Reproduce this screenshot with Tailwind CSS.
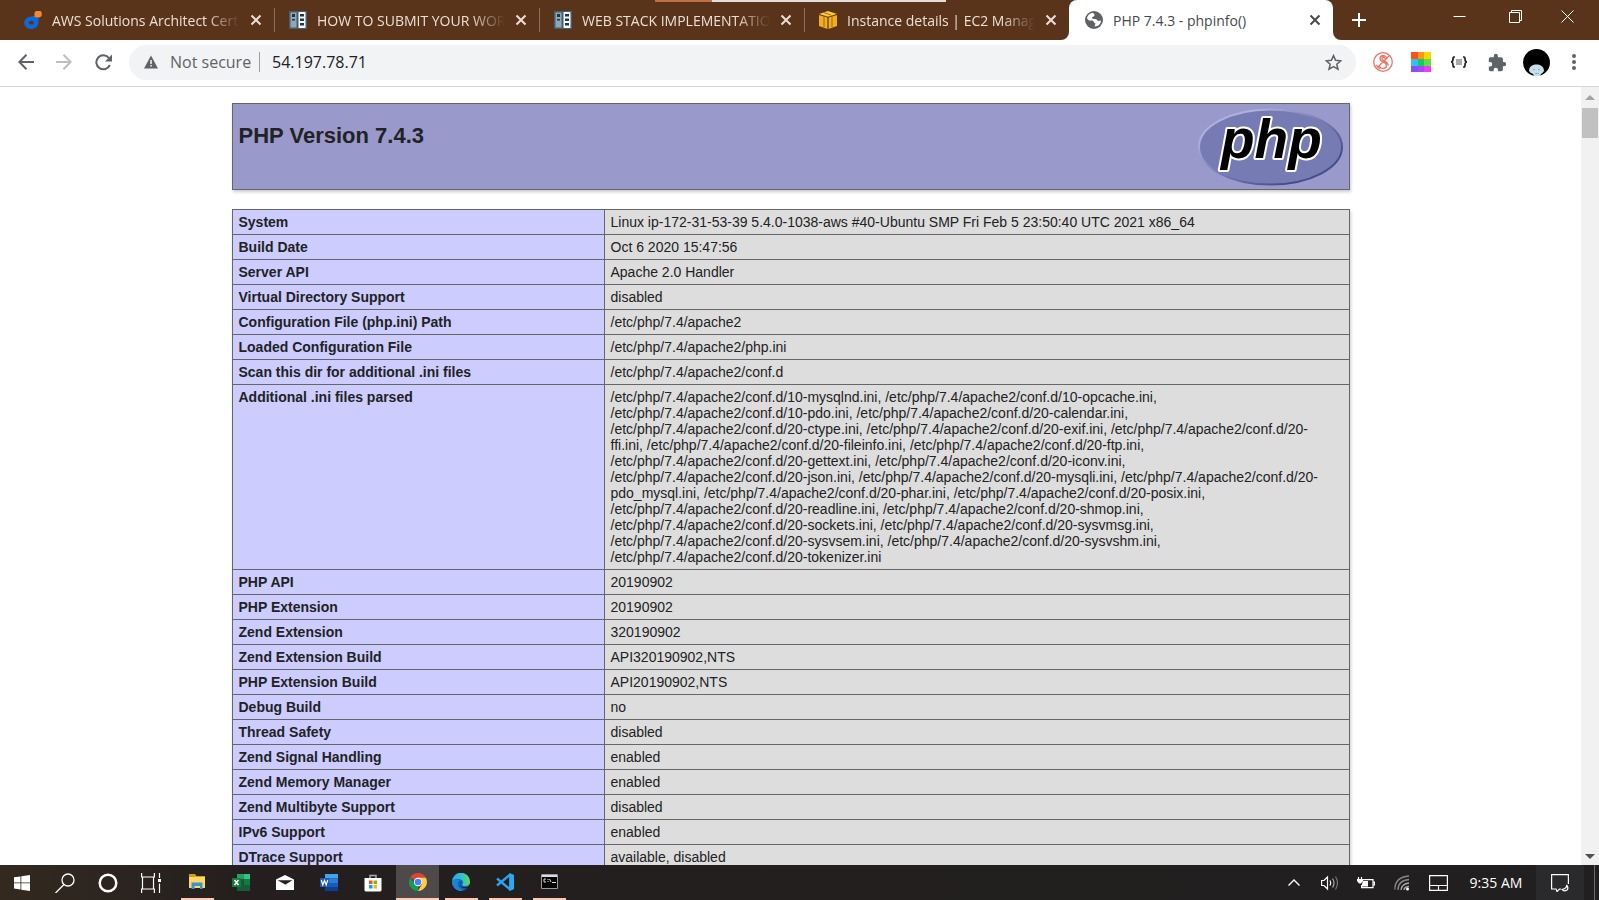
<!DOCTYPE html>
<html lang="en">
<head>
<meta charset="utf-8">
<title>PHP 7.4.3 - phpinfo()</title>
<script src="https://cdn.jsdelivr.net/npm/@tailwindcss/browser@4"></script>
</head>
<body class="flex h-screen flex-col overflow-hidden bg-white font-['Open_Sans','Noto_Sans',sans-serif] text-[#222]">

<!-- Tab strip -->
<header class="relative flex h-10 shrink-0 bg-[#5a341a] pl-2.5 text-[14px] text-[#ecdfd6]">
  <div class="absolute left-[655px] top-0 flex h-0.5 w-[291px]"><span class="w-[57px] bg-[#bf7040]"></span><span class="flex-1 bg-[#e4ddd8]"></span></div>
  <nav class="flex" aria-label="Tabs">
    <div class="flex w-[265px] items-center pl-3.5">
      <svg class="size-[18px] shrink-0" viewBox="0 0 18 18"><path fill="#0f68d8" fill-rule="evenodd" d="M7 5.500C9 5 12 5.500 14.500 5.500V12A7.200 6.300 0 1 1 7 5.500ZM7.300 9.800a2.500 1.900 0 1 0 .1 0Z"/><path fill="#f58634" d="M10.500 6V3.500A3.700 3.500 0 1 1 14.500 6.500Z"/></svg>
      <a href="#" class="ml-2.5 w-[188px] overflow-hidden whitespace-nowrap [mask-image:linear-gradient(to_right,black_82%,transparent)]">AWS Solutions Architect Certification</a>
      <button class="ml-2.5" aria-label="Close tab"><svg class="size-3" viewBox="0 0 12 12" fill="none" stroke="currentColor" stroke-width="2"><path d="M1.500 1.500l9 9m0-9l-9 9"/></svg></button>
      <span class="ml-auto h-6 w-px bg-[#8c6f5b]"></span>
    </div>
    <div class="flex w-[265px] items-center pl-3.5">
      <svg class="size-[18px] shrink-0" viewBox="0 0 18 18"><path fill="#455f6c" d="M0 0h18v18H0z"/><path fill="#8ba9b8" d="M1.500 1.500h6v15h-6z"/><path fill="#f5f8fa" d="M9.500 1h7v16h-7z"/><path fill="#24353e" d="M3 3h3v3H3zm0 5h3v1.500H3zM11 3h4v2.500h-4zm0 4.500h4V10h-4zm0 4.500h4v2.500h-4z"/></svg>
      <a href="#" class="ml-2.5 w-[188px] overflow-hidden whitespace-nowrap [mask-image:linear-gradient(to_right,black_82%,transparent)]">HOW TO SUBMIT YOUR WORK</a>
      <button class="ml-2.5" aria-label="Close tab"><svg class="size-3" viewBox="0 0 12 12" fill="none" stroke="currentColor" stroke-width="2"><path d="M1.500 1.500l9 9m0-9l-9 9"/></svg></button>
      <span class="ml-auto h-6 w-px bg-[#8c6f5b]"></span>
    </div>
    <div class="flex w-[265px] items-center pl-3.5">
      <svg class="size-[18px] shrink-0" viewBox="0 0 18 18"><path fill="#455f6c" d="M0 0h18v18H0z"/><path fill="#8ba9b8" d="M1.500 1.500h6v15h-6z"/><path fill="#f5f8fa" d="M9.500 1h7v16h-7z"/><path fill="#24353e" d="M3 3h3v3H3zm0 5h3v1.500H3zM11 3h4v2.500h-4zm0 4.500h4V10h-4zm0 4.500h4v2.500h-4z"/></svg>
      <a href="#" class="ml-2.5 w-[188px] overflow-hidden whitespace-nowrap [mask-image:linear-gradient(to_right,black_82%,transparent)]">WEB STACK IMPLEMENTATION</a>
      <button class="ml-2.5" aria-label="Close tab"><svg class="size-3" viewBox="0 0 12 12" fill="none" stroke="currentColor" stroke-width="2"><path d="M1.500 1.500l9 9m0-9l-9 9"/></svg></button>
      <span class="ml-auto h-6 w-px bg-[#8c6f5b]"></span>
    </div>
    <div class="flex w-[264px] items-center pl-3.5">
      <svg class="size-[18px] shrink-0" viewBox="0 0 18 18"><path fill="#ffc83c" d="M0 3L9 0l9 3-9 3z"/><path fill="#f2ae1c" d="M0 4l8.500 2.500V18L0 15zM18 4L9.500 6.500V18l8.500-3z"/><path stroke="#7a4d0b" fill="none" d="M0 3.500L9 6l9-2.500M9 6v12M4.500 1.500L12 4M5 5v11M13 5v11" stroke-width=".7"/></svg>
      <a href="#" class="ml-2.5 w-[188px] overflow-hidden whitespace-nowrap [mask-image:linear-gradient(to_right,black_82%,transparent)]">Instance details | EC2 Management</a>
      <button class="ml-2.5" aria-label="Close tab"><svg class="size-3" viewBox="0 0 12 12" fill="none" stroke="currentColor" stroke-width="2"><path d="M1.500 1.500l9 9m0-9l-9 9"/></svg></button>
    </div>
    <div class="relative flex w-[264px] items-center rounded-t-lg bg-white pl-4 text-[#45494d]">
      <svg class="absolute bottom-0 -left-2 size-2" viewBox="0 0 8 8"><path fill="#fff" d="M8 0v8H0a8 8 0 0 0 8-8z"/></svg>
      <svg class="absolute bottom-0 -right-2 size-2" viewBox="0 0 8 8"><path fill="#fff" d="M0 0v8h8a8 8 0 0 1-8-8z"/></svg>
      <svg class="size-[18px] shrink-0" viewBox="0 0 18 18"><circle cx="9" cy="9" r="9" fill="#5f6368"/><path fill="#fff" d="M8.500 2C5 2 2.500 4 2 7.500L4 9.500c2 .5 2.500-.5 4 .5 1.500 1 .500 2 2.500 2.500L9.500 15.500c4 0 6.500-3 6.500-6l-2.500.5C12 9.500 12 8 10 8 8 8 7 8 7 6.500 7 5.500 9 6 9.500 4.500 10 3.500 8.500 3 8.500 2z"/></svg>
      <a href="#" class="ml-2.5 w-[186px] overflow-hidden whitespace-nowrap">PHP 7.4.3 - phpinfo()</a>
      <button class="ml-2.5" aria-label="Close tab"><svg class="size-3" viewBox="0 0 12 12" fill="none" stroke="currentColor" stroke-width="2"><path d="M1.500 1.500l9 9m0-9l-9 9"/></svg></button>
    </div>
  </nav>
  <button class="ml-[19px]" aria-label="New tab"><svg class="size-3.5" viewBox="0 0 14 14" fill="none" stroke="#fff" stroke-width="2"><path d="M7 0v14M0 7h14"/></svg></button>
  <div class="ml-auto flex h-8 pr-2 text-white">
    <button class="flex w-14 items-center justify-center" aria-label="Minimize"><svg class="size-[13px]" viewBox="0 0 13 13" stroke="currentColor"><path d="M.5 6.500h12"/></svg></button>
    <button class="flex w-14 items-center justify-center" aria-label="Restore"><svg class="size-[13px]" viewBox="0 0 13 13" fill="none" stroke="currentColor"><path d="M.5 2.500h10v10H.5zM2.500 2.500v-2h10v10h-2"/></svg></button>
    <button class="flex w-12 items-center justify-center" aria-label="Close"><svg class="size-[13px]" viewBox="0 0 13 13" stroke="currentColor"><path d="M.5.5l12 12m0-12l-12 12"/></svg></button>
  </div>
</header>

<!-- Toolbar -->
<div class="flex h-[47px] shrink-0 items-center border-b border-[#d6d6d6] pb-0.5 pr-[7px] pt-0 text-[#5f6368]">
  <div class="flex w-[129px] shrink-0 pl-[7px]">
    <button class="flex w-[38px] justify-center" aria-label="Back"><svg class="size-4" viewBox="0 0 16 16" fill="none" stroke="currentColor" stroke-width="2"><path d="M16 8H1.500M8.500.8L1.400 8l7.100 7.200"/></svg></button>
    <button class="flex w-[38px] justify-center text-[#bcbec0]" aria-label="Forward"><svg class="size-4" viewBox="0 0 16 16" fill="none" stroke="currentColor" stroke-width="2"><path d="M0 8h14.500M7.500.8L14.600 8l-7.100 7.200"/></svg></button>
    <button class="flex w-[40px] justify-center" aria-label="Reload"><svg class="size-[17px]" viewBox="0 0 17 17" fill="none" stroke="currentColor" stroke-width="2"><path d="M14.800 11A7 7 0 1 1 14 4.200"/><path d="M17 .5V7.500H10z" fill="currentColor" stroke="none"/></svg></button>
  </div>
  <div class="flex h-[35px] flex-1 items-center rounded-full bg-[#f1f3f4] pl-[15px] pr-3.5 text-[16px]">
    <svg class="size-3.5 shrink-0" viewBox="0 0 14 14"><path fill="#5f6368" d="M7 .5L14 13.500H0z"/><path fill="#f1f3f4" d="M6.300 5h1.500v4H6.300zm0 5h1.500v1.500H6.300z"/></svg>
    <span class="ml-3 w-[80px] whitespace-nowrap">Not secure</span>
    <span class="ml-[9px] h-5 w-px bg-[#9aa0a6]"></span>
    <input class="ml-3 min-w-0 flex-1 bg-transparent text-[#202124] outline-none" aria-label="Address" value="54.197.78.71">
    <button aria-label="Bookmark"><svg class="size-[17px]" viewBox="0 0 17 17" fill="none" stroke="currentColor" stroke-width="1.500"><path d="M8.500 1.600l2.100 4.700 5.100.5-3.900 3.400 1.200 5-4.500-2.700L4 15.200l1.200-5L1.300 6.800l5.100-.5z"/></svg></button>
  </div>
  <div class="ml-2 flex h-[35px] items-center">
    <button class="flex w-[38px] justify-center" aria-label="Extension"><svg class="size-5" viewBox="0 0 20 20" fill="none" stroke="#ee7263"><circle cx="10" cy="10" r="9.300" stroke-width="1.300"/><path stroke-width="1.300" d="M13.500 5.500C12 3 7 3 7 6.500c0 4 6.500 3 6.500 7 0 3.500-5.500 3.800-7 1M12.500 7C11 4.500 8.800 5 8.800 6.500c0 2.500 6.500 3 6.500 7M4 16L16 4M3 13l4 4"/></svg></button>
    <button class="flex w-[38px] justify-center" aria-label="Colour extension"><svg class="size-5" viewBox="0 0 20 20"><path fill="#ff5016" d="M0 0h7v7H0z"/><path fill="#ff9416" d="M7 0h6v7H7z"/><path fill="#ffd500" d="M13 0h7v7h-7z"/><path fill="#2fc0f4" d="M0 7h7v7H0z"/><path fill="#10cc66" d="M7 7h6v7H7z"/><path fill="#5ee043" d="M13 7h7v7h-7z"/><path fill="#8450f0" d="M0 14h7v6H0z"/><path fill="#b044f8" d="M7 14h6v6H7z"/><path fill="#ee3cf0" d="M13 14h7v6h-7z"/></svg></button>
    <button class="flex w-[38px] justify-center" aria-label="JSON extension"><svg class="h-3 w-4" viewBox="0 0 16 12" fill="none" stroke="#222"><path stroke-width="1.700" d="M4 1H3Q2 1 2 3 2 6 0 6q2 0 2 3 0 2 1 2h1M12 1h1q1 0 1 2 0 3 2 3-2 0-2 3 0 2-1 2h-1"/><path d="M5 4h6M5 6h6M5 8h6" stroke="#555"/></svg></button>
    <button class="flex w-[38px] justify-center" aria-label="Extensions"><svg class="size-[19px]" viewBox="1 0 23 23"><path fill="#5f6368" d="M20.500 11H19V7c0-1.100-.9-2-2-2h-4V3.500a2.500 2.500 0 0 0-5 0V5H4c-1.100 0-2 .9-2 2v3.800h1.500a2.700 2.700 0 0 1 0 5.400H2V20c0 1.100.9 2 2 2h3.800v-1.500a2.700 2.700 0 0 1 5.400 0V22H17c1.100 0 2-.9 2-2v-4h1.500a2.500 2.500 0 0 0 0-5z"/></svg></button>
    <button class="flex w-[40px] justify-center" aria-label="Profile"><svg class="size-[27px]" viewBox="0 0 27 27"><circle cx="13.500" cy="13.500" r="13.500" fill="#000"/><path fill="#c5dfe8" d="M6 22C6 17 10 15.500 13.500 15.500S21 17 21 22q-1 2-3 3l-1 2h-6l-1-2q-3-1-4-3z"/><path fill="#88aebd" d="M10 20h2v1h-2zm5 0h2v1h-2zm-3 4h4v1h-4z"/></svg></button>
    <button class="flex w-9 justify-center" aria-label="Menu"><svg class="h-4 w-1" viewBox="0 0 4 16" fill="#5f6368"><circle cx="2" cy="2" r="2"/><circle cx="2" cy="8" r="2"/><circle cx="2" cy="14" r="2"/></svg></button>
  </div>
</div>

<!-- Page -->
<div class="flex min-h-0 flex-1">
  <main class="min-w-0 flex-1 overflow-hidden px-6 pt-4 font-['Liberation_Sans',Arial,sans-serif] text-[14px] leading-4">
    <div class="mx-auto flex h-[87px] max-w-[1118px] items-start justify-between border border-[#666] bg-[#9999cc] px-1.5 py-1 shadow-[1px_2px_3px_#ccc]">
      <h1 class="mt-3.5 text-[22px] font-bold leading-7">PHP Version 7.4.3</h1>
      <svg class="h-[78px] w-[145px]" viewBox="0 0 145 78" role="img" aria-label="PHP logo">
        <defs><linearGradient id="rim" x1="0" y1="0" x2="1" y2="1"><stop offset=".2" stop-color="#aeb2de"/><stop offset=".5" stop-color="#777bb3"/><stop offset=".8" stop-color="#484c89"/></linearGradient></defs>
        <ellipse cx="72.500" cy="39" rx="71.500" ry="37.500" fill="#777bb3" stroke="url(#rim)" stroke-width="2"/>
        <text x="23" y="50" font-family="Liberation Sans" font-size="55" font-weight="700" font-style="italic" fill="#000" stroke="#fff" stroke-width="4" stroke-linejoin="round" paint-order="stroke">php</text>
      </svg>
    </div>
    <table class="mx-auto mt-[19px] w-full max-w-[1118px] border-collapse shadow-[1px_2px_3px_#ccc] [&_td]:border [&_td]:border-[#666] [&_td]:bg-[#dddddd] [&_td]:px-1.5 [&_td]:py-1 [&_td]:align-top [&_th]:w-[372px] [&_th]:border [&_th]:border-[#666] [&_th]:bg-[#ccccff] [&_th]:px-1.5 [&_th]:py-1 [&_th]:text-left [&_th]:align-top">
      <tbody>
        <tr><th scope="row">System</th><td>Linux ip-172-31-53-39 5.4.0-1038-aws #40-Ubuntu SMP Fri Feb 5 23:50:40 UTC 2021 x86_64</td></tr>
        <tr><th scope="row">Build Date</th><td>Oct 6 2020 15:47:56</td></tr>
        <tr><th scope="row">Server API</th><td>Apache 2.0 Handler</td></tr>
        <tr><th scope="row">Virtual Directory Support</th><td>disabled</td></tr>
        <tr><th scope="row">Configuration File (php.ini) Path</th><td>/etc/php/7.4/apache2</td></tr>
        <tr><th scope="row">Loaded Configuration File</th><td>/etc/php/7.4/apache2/php.ini</td></tr>
        <tr><th scope="row">Scan this dir for additional .ini files</th><td>/etc/php/7.4/apache2/conf.d</td></tr>
        <tr><th scope="row">Additional .ini files parsed</th><td>/etc/php/7.4/apache2/conf.d/10-mysqlnd.ini, /etc/php/7.4/apache2/conf.d/10-opcache.ini,<br>/etc/php/7.4/apache2/conf.d/10-pdo.ini, /etc/php/7.4/apache2/conf.d/20-calendar.ini,<br>/etc/php/7.4/apache2/conf.d/20-ctype.ini, /etc/php/7.4/apache2/conf.d/20-exif.ini, /etc/php/7.4/apache2/conf.d/20-<br>ffi.ini, /etc/php/7.4/apache2/conf.d/20-fileinfo.ini, /etc/php/7.4/apache2/conf.d/20-ftp.ini,<br>/etc/php/7.4/apache2/conf.d/20-gettext.ini, /etc/php/7.4/apache2/conf.d/20-iconv.ini,<br>/etc/php/7.4/apache2/conf.d/20-json.ini, /etc/php/7.4/apache2/conf.d/20-mysqli.ini, /etc/php/7.4/apache2/conf.d/20-<br>pdo_mysql.ini, /etc/php/7.4/apache2/conf.d/20-phar.ini, /etc/php/7.4/apache2/conf.d/20-posix.ini,<br>/etc/php/7.4/apache2/conf.d/20-readline.ini, /etc/php/7.4/apache2/conf.d/20-shmop.ini,<br>/etc/php/7.4/apache2/conf.d/20-sockets.ini, /etc/php/7.4/apache2/conf.d/20-sysvmsg.ini,<br>/etc/php/7.4/apache2/conf.d/20-sysvsem.ini, /etc/php/7.4/apache2/conf.d/20-sysvshm.ini,<br>/etc/php/7.4/apache2/conf.d/20-tokenizer.ini</td></tr>
        <tr><th scope="row">PHP API</th><td>20190902</td></tr>
        <tr><th scope="row">PHP Extension</th><td>20190902</td></tr>
        <tr><th scope="row">Zend Extension</th><td>320190902</td></tr>
        <tr><th scope="row">Zend Extension Build</th><td>API320190902,NTS</td></tr>
        <tr><th scope="row">PHP Extension Build</th><td>API20190902,NTS</td></tr>
        <tr><th scope="row">Debug Build</th><td>no</td></tr>
        <tr><th scope="row">Thread Safety</th><td>disabled</td></tr>
        <tr><th scope="row">Zend Signal Handling</th><td>enabled</td></tr>
        <tr><th scope="row">Zend Memory Manager</th><td>enabled</td></tr>
        <tr><th scope="row">Zend Multibyte Support</th><td>disabled</td></tr>
        <tr><th scope="row">IPv6 Support</th><td>enabled</td></tr>
        <tr><th scope="row">DTrace Support</th><td>available, disabled</td></tr>
      </tbody>
    </table>
  </main>
  <div class="flex w-[18px] shrink-0 flex-col items-center bg-[#f1f1f1]">
    <svg class="my-2 h-[5px] w-2.5 shrink-0" viewBox="0 0 10 5"><path fill="#a3a3a3" d="M5 0l5 5H0z"/></svg>
    <span class="h-[30px] w-4 bg-[#c1c1c1]"></span>
    <svg class="mb-1.5 mt-auto h-[5px] w-2.5 shrink-0" viewBox="0 0 10 5"><path fill="#505050" d="M0 0h10L5 5z"/></svg>
  </div>
</div>

<!-- Taskbar -->
<footer class="flex h-[35px] shrink-0 justify-between bg-linear-to-r from-[#33291f] via-[#241f1e] via-15% to-[#211f20] text-white">
  <div class="flex">
    <button class="flex w-[43px] items-center justify-center" aria-label="Start"><svg class="size-4" viewBox="0 0 16 16" fill="#fff"><path d="M0 2.300l6.500-.9v6.100H0zM7.300 1.300L16 0v7.500H7.300zM0 8.300h6.500v6.200L0 13.600zM7.300 8.300H16V16l-8.700-1.300z"/></svg></button>
    <button class="flex w-[43px] items-center justify-center" aria-label="Search"><svg class="size-5" viewBox="0 0 20 20" fill="none" stroke="#fff" stroke-width="1.300"><circle cx="13" cy="7" r="6"/><path d="M9 11.500L.5 20"/></svg></button>
    <button class="flex w-[43px] items-center justify-center" aria-label="Cortana"><svg class="size-5" viewBox="0 0 20 20" fill="none" stroke="#fff" stroke-width="2.500"><circle cx="10" cy="10" r="8.300"/></svg></button>
    <button class="flex w-[43px] items-center justify-center" aria-label="Task view"><svg class="size-5" viewBox="0 0 20 20" fill="none" stroke="#fff" stroke-width="1.200"><path d="M.6 0v4h12.800V0M.6 20v-4h12.800v4M1.500 4v12M12.500 4v12M18.500 0v5M18.500 10.500V20"/><path d="M17 6h3v3h-3z" fill="#fff" stroke="none"/></svg></button>
    <div class="ml-[3px] flex">
      <button class="flex w-11 items-center justify-center shadow-none" aria-label="File Explorer"><span class="flex h-full w-[33px] items-center justify-center border-b-2 border-[#ffc9ae]"><svg class="h-[15px] w-4" viewBox="0 0 16 15"><path fill="#d99a1c" d="M0 0h6l1.500 2H16v5H0z"/><path fill="#ffd766" d="M0 3h16v11H0z"/><path fill="#3a93d4" d="M2.500 8.500h11V15H11v-3H5.500v3h-3z"/></svg></span></button>
      <button class="flex w-11 items-center justify-center" aria-label="Excel"><svg class="h-[17px] w-[18px]" viewBox="0 0 18 17"><path fill="#21a366" d="M5 0h6.500v5H5z"/><path fill="#33c481" d="M11.500 0H18v5h-6.500z"/><path fill="#107c41" d="M11.500 5H18v6h-6.500z"/><path fill="#185c37" d="M5 5h6.500v12H5zm6.500 6H18v6h-6.500z"/><path fill="#107c41" d="M0 4h9v9H0z"/><path stroke="#fff" stroke-width="1.500" d="M2.500 6l4 5m0-5l-4 5"/></svg></button>
      <button class="flex w-11 items-center justify-center" aria-label="Mail"><svg class="size-[18px]" viewBox="0 0 18 18"><path fill="#fff" d="M0 5.500L9 1l9 4.500V16H0z"/><path fill="#222" d="M1.500 6.300h15L9.500 10.500 12 12z"/></svg></button>
      <button class="flex w-11 items-center justify-center" aria-label="Word"><svg class="h-[17px] w-[18px]" viewBox="0 0 18 17"><path fill="#41a5ee" d="M5 0h13v4.500H5z"/><path fill="#2b7cd3" d="M5 4.500h13V9H5z"/><path fill="#185abd" d="M5 9h13v4H5z"/><path fill="#103f91" d="M5 13h13v4H5z"/><path fill="#185abd" d="M0 4h9v9H0z"/><path stroke="#fff" fill="none" stroke-width="1.200" d="M1.300 6l1.500 5 1.700-4.500L6.200 11l1.500-5"/></svg></button>
      <button class="flex w-[43px] items-center justify-center" aria-label="Microsoft Store"><svg class="size-[18px]" viewBox="0 0 18 18"><path fill="none" stroke="#aaa" stroke-width="1.500" d="M6 5V1.500h6V5"/><path fill="#fff" d="M.5 4h17v12q0 1.500-1.500 1.500H2Q.5 17.500.5 16z"/><path fill="#f25022" d="M5 6.500h3.500V10H5z"/><path fill="#7fba00" d="M9.500 6.500H13V10H9.500z"/><path fill="#00a4ef" d="M5 11h3.500v3.500H5z"/><path fill="#ffb900" d="M9.500 11H13v3.500H9.500z"/></svg></button>
      <button class="ml-[2px] flex w-[43px] items-center justify-center border-b-2 border-[#ffc9ae] bg-[#4e4a49]" aria-label="Chrome"><svg class="size-[18px]" viewBox="0 0 18 18"><path fill="#db4437" d="M9 9L1.200 4.500A9 9 0 0 1 16.800 4.500z"/><path fill="#0f9d58" d="M9 9v9A9 9 0 0 1 1.200 4.500L5.500 11z"/><path fill="#ffcd40" d="M9 4.800h7.900A9 9 0 0 1 9 18l4-7z"/><circle cx="9" cy="9" r="4.200" fill="#fff"/><circle cx="9" cy="9" r="3.300" fill="#4285f4"/></svg></button>
      <button class="flex w-11 items-center justify-center" aria-label="Edge"><span class="flex h-full w-[33px] items-center justify-center border-b-2 border-[#ffc9ae]"><svg class="size-[18px]" viewBox="0 0 18 18"><defs><linearGradient id="edge"><stop offset="0" stop-color="#22a7e8"/><stop offset=".6" stop-color="#35c1c8"/><stop offset="1" stop-color="#65d94c"/></linearGradient></defs><circle cx="9" cy="9" r="9" fill="#1364b8"/><path fill="url(#edge)" d="M0 8.500A9 9 0 0 1 18 9c0 3-2.500 4-5 4-2 0-3.500-.8-2.500-2C12.500 8 9 6 6 6S1 7 0 8.500z"/><path fill="#1a84d6" d="M0 8.500C1.500 6 6 6 8 7.500 5 8 5 13 8 15.500c1.500 1.200 2.500 2 3 2.200A9 9 0 0 1 0 8.500z"/><path fill="#2a2120" d="M8.500 8.500c-1 1-1 5 3 5.500 2.500.5 4-.5 5.500-1l.5-1 1 1-2 2c-3 1.500-8 0-8.500-3z"/></svg></span></button>
      <button class="flex w-11 items-center justify-center" aria-label="Visual Studio Code"><span class="flex h-full w-[33px] items-center justify-center border-b-2 border-[#ffc9ae]"><svg class="size-[18px]" viewBox="0 0 18 18"><path fill="#1f7fc4" d="M13 0l5 2v14l-5 2z"/><path fill="none" stroke="#2aa2ec" stroke-width="2.400" d="M14 1.800L1 12.500M14 16.200L1 5.500"/><path fill="#2aa9f4" d="M13.500 0L18 2v14l-4.500 2z"/></svg></span></button>
      <button class="flex w-11 items-center justify-center" aria-label="Command Prompt"><span class="flex h-full w-[33px] items-center justify-center border-b-2 border-[#ffc9ae]"><svg class="h-[15px] w-[17px]" viewBox="0 0 17 15"><path fill="#000" stroke="#999" d="M.5.5h16v14H.5z"/><path fill="#ddd" d="M1 1h15v2H1z"/><path stroke="#ddd" fill="none" d="M5 5H3v3h2M7 5v1m0 1v1M8.500 5L10 8M11 8.500h4"/></svg></span></button>
    </div>
  </div>
  <div class="flex">
    <button class="flex w-9 items-center justify-center" aria-label="Show hidden icons"><svg class="h-[7px] w-3" viewBox="0 0 12 7" fill="none" stroke="#fff" stroke-width="1.400"><path d="M.5 6.500L6 1l5.500 5.500"/></svg></button>
    <button class="flex w-9 items-center justify-center" aria-label="Volume"><svg class="h-4 w-[19px]" viewBox="0 0 19 16" fill="none" stroke="#fff" stroke-width="1.200"><path d="M.6 5.500H3L6.500 2v12L3 10.500H.6zM9 5.500q1.500 2.500 0 5"/><path stroke="#aaa" d="M11.500 3.500q3 4.500 0 9"/><path stroke="#777" d="M14.500 1.500q4 6.500 0 13"/></svg></button>
    <button class="flex w-9 items-center justify-center" aria-label="Battery"><svg class="h-3 w-[18px]" viewBox="0 0 18 12" fill="none" stroke="#fff" stroke-width="1.200"><path d="M6 2.600h10v8H4.600V8M16 5h1.500v3H16"/><path fill="#fff" stroke="none" d="M6 4h5v5.500H5V7zM0 2h6v2L4 6.500H2L0 4z"/><path d="M1.500 0v2M4.500 0v2"/></svg></button>
    <button class="flex w-9 items-center justify-center" aria-label="Network"><svg class="size-4" viewBox="0 0 16 16" fill="none" stroke="#aaa" stroke-width="1.300"><path stroke="#888" d="M.8 14.500Q1 2 15 1M4 15Q4 5.500 15 4.500"/><path d="M7 15q.5-6 8-7M10 15q0-3 5-3.500"/><circle cx="13.500" cy="14" r="1.500" fill="#fff" stroke="none"/></svg></button>
    <button class="flex w-9 items-center justify-center" aria-label="Touchpad"><svg class="h-4 w-[19px]" viewBox="0 0 19 16" fill="none" stroke="#fff" stroke-width="1.200"><path d="M.6.6h17.800v14.800H.6zM.6 10.500h17.800M9.500 10.500v5"/></svg></button>
    <time class="flex w-20 items-center justify-center whitespace-nowrap text-[14px]">9:35 AM</time>
    <button class="flex w-12 items-center justify-center bg-[#2a2a2c]" aria-label="Notifications"><svg class="size-[18px]" viewBox="0 0 18 18" fill="none" stroke="#fff" stroke-width="1.200"><path d="M10 15H8.500L6 17.500 5 15H.6V.6h16.800V10"/><path d="M15.500 11q1 3-4.500 4.500 2 2.500 5 .5 2-2-.5-5z"/></svg></button>
    <span class="ml-2.5 mr-1 w-px bg-[#6a6868]"></span>
  </div>
</footer>
</body>
</html>
